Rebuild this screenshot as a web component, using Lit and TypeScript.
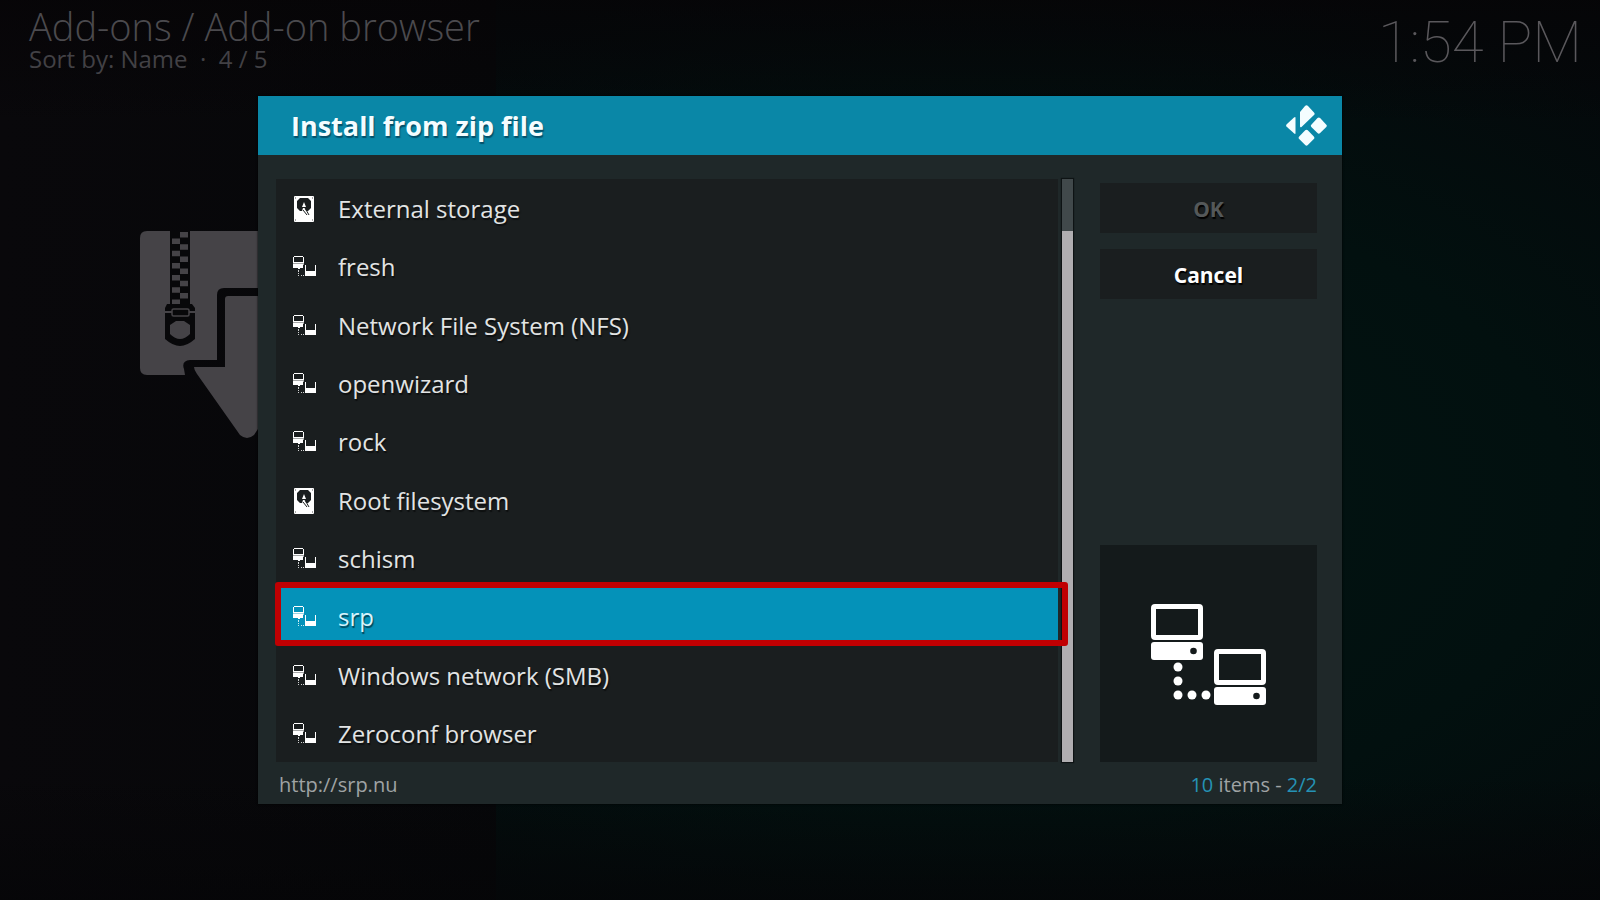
import { LitElement, html, css, svg } from "lit";
import { customElement, state } from "lit/decorators.js";

type Kind = "disk" | "network";
interface Entry {
  name: string;
  kind: Kind;
}

const ENTRIES: Entry[] = [
  { name: "External storage", kind: "disk" },
  { name: "fresh", kind: "network" },
  { name: "Network File System (NFS)", kind: "network" },
  { name: "openwizard", kind: "network" },
  { name: "rock", kind: "network" },
  { name: "Root filesystem", kind: "disk" },
  { name: "schism", kind: "network" },
  { name: "srp", kind: "network" },
  { name: "Windows network (SMB)", kind: "network" },
  { name: "Zeroconf browser", kind: "network" },
];

const diskIcon = html`<svg class="icon" width="24" height="26" viewBox="0 0 24 26" aria-hidden="true">
  <rect x="2" y="0" width="20" height="26" rx="1" fill="#fff" />
  <path d="M3 2h1M20 2h1M3 24h1M20 24h1" stroke="#555" />
  <path d="M8 2h8l3 3v7l-3 3h-2l-1-3h-2l-1 3H8l-3-3V5z" fill="#1a1e1f" />
  <path d="M13 12l4 7M11 14l4 5" stroke="#1a1e1f" stroke-width="1" />
  <path d="M12 6l2 5h-4z" fill="#fff" />
</svg>`;

const networkIcon = html`<svg class="icon" width="24" height="22" viewBox="0 0 24 22" aria-hidden="true" shape-rendering="crispEdges">
  <path d="M2 0h9v1H2zM1 1h1v6H1zM11 1h1v6h-1zM2 6h9v1H2z" fill="#fff" />
  <path d="M1 7h11v2H1z" fill="#fff" opacity=".6" />
  <path d="M1 8h10v4H1zM6 12h2v1H6z" fill="#fff" />
  <path d="M6 14h1v2H6zM6 17h1v1H6zM6 19h1v1H6zM9 19h1v1H9zM11 19h1v1h-1z" fill="#fff" opacity=".8" />
  <path d="M13 9h1v6h9V9h1v11H13z" fill="#fff" />
</svg>`;

const computer = svg`
  <rect x="2.500" y="2.500" width="47" height="31" rx="1.500" fill="none" stroke="#fff" stroke-width="5" />
  <rect x="0" y="38" width="52" height="18" rx="3" fill="#fff" />
  <circle cx="42.500" cy="47" r="3.300" fill="#141a1b" />`;

const teeth = [0, 1, 2, 3, 4, 5].map(
  (i) => svg`<path d="M40 ${1 + i * 12.2}h8v5.500h-8zM32 ${7.5 + i * 12.2}h8v5.500h-8z" />`,
);

@customElement("app-root")
export class AppRoot extends LitElement {
  @state() private selected = 7;

  static styles = css`
    :host {
      display: block;
      font-family: "Open Sans", "Noto Sans", sans-serif;
      color: #e2e4e4;
    }
    * {
      box-sizing: border-box;
    }
    .screen {
      position: relative;
      min-height: 100vh;
      overflow: hidden;
      display: grid;
      background: linear-gradient(90deg, #09080b 0, #060709 31%, transparent 31%),
        radial-gradient(ellipse 60% 60% at 62% 56%, #021513 0, #02100f 60%, #04090b 100%);
    }
    .screen::before {
      content: "";
      position: absolute;
      inset: 0;
      background: linear-gradient(180deg, #060406 0, transparent 14%, transparent 86%, #050507 100%);
      opacity: 0.7;
    }
    .topbar {
      position: absolute;
      inset: 0 0 auto 0;
      display: flex;
      justify-content: space-between;
      padding: 5px 18px 0 29px;
      color: #4b4a4e;
    }
    .crumb {
      margin: 0;
      font-size: 38px;
      line-height: 42px;
      font-weight: 300;
    }
    .sort {
      margin: 0;
      font-size: 24px;
      line-height: 24px;
      font-weight: 400;
      color: #424145;
      white-space: pre;
    }
    .clock {
      font-family: Roboto, sans-serif;
      font-weight: 100;
      font-size: 58px;
      line-height: 74px;
      color: #5a585c;
    }
    .backdrop-art {
      position: absolute;
      left: 140px;
      top: 231px;
    }
    .dialog {
      position: relative;
      place-self: center;
      width: 67.75%;
      display: flex;
      flex-direction: column;
      background: #1f2829;
      box-shadow: 0 0 2px #000;
    }
    .titlebar {
      display: flex;
      align-items: center;
      justify-content: space-between;
      height: 59px;
      padding: 0 15px 0 33px;
      background: #0a87a7;
      color: #f4fdff;
    }
    .title {
      margin: 0;
      font-size: 27px;
      line-height: 36px;
      font-weight: 700;
      text-shadow: 1px 2px 1px #05506a;
    }
    .body {
      display: grid;
      grid-template-columns: 1fr 11px 244px;
      padding: 24px 25px 0 18px;
    }
    .list {
      display: grid;
      grid-template-rows: repeat(10, 1fr);
      height: 583px;
      margin: 0 4px 0 0;
      padding: 0;
      list-style: none;
      background: #1a1e1f;
    }
    .item {
      position: relative;
      display: grid;
    }
    .row {
      display: flex;
      align-items: center;
      gap: 22px;
      width: 100%;
      padding: 2px 16px 0;
      border: 0;
      background: none;
      color: inherit;
      font: 400 24px/34px "Open Sans", "Noto Sans", sans-serif;
      text-align: left;
      text-shadow: 1px 2px 1px #0008;
    }
    .item.selected {
      background: #0492b9;
      color: #d9f3fb;
    }
    .highlight {
      position: absolute;
      z-index: 1;
      inset: -5px -10px -1px -1px;
      border: 6px solid #c00002;
      border-radius: 3px;
      pointer-events: none;
    }
    .icon {
      flex: none;
      display: block;
    }
    .scroll {
      display: flex;
      flex-direction: column;
      background: #41494b;
      box-shadow: 0 0 1px 1px #0e1314;
    }
    .thumb {
      margin-top: 52px;
      flex: 1;
      background: #b0aeb1;
    }
    .side {
      display: flex;
      flex-direction: column;
      gap: 16px;
      padding: 4px 0 0 27px;
    }
    .button {
      height: 50px;
      padding: 2px 0 0;
      border: 0;
      background: #1a1e1f;
      color: #fff;
      font: 700 21px/28px "Open Sans", "Noto Sans", sans-serif;
      text-shadow: 1px 2px 1px #000;
    }
    .button:disabled {
      color: #545859;
    }
    .preview {
      display: grid;
      place-items: center;
      height: 217px;
      margin-top: auto;
      padding-top: 2px;
      background: #141a1b;
    }
    .status {
      display: flex;
      justify-content: space-between;
      align-items: center;
      height: 42px;
      padding: 4px 25px 0 21px;
      font-size: 20px;
      line-height: 28px;
      color: #9fa3a4;
    }
    .accent {
      color: #2592b4;
    }
  `;

  render() {
    return html`
      <main class="screen">
        <header class="topbar">
          <div>
            <h1 class="crumb">Add-ons / Add-on browser</h1>
            <p class="sort">Sort by: Name  ·  4 / 5</p>
          </div>
          <time class="clock">1:54 PM</time>
        </header>

        <svg class="backdrop-art" width="220" height="210" viewBox="0 0 220 210" aria-hidden="true">
          <g fill="#454347">
            <path d="M7 0H213q7 0 7 7V57H84q-7 0-7 7V129H50q-9 1-6 9l1 6H7q-7 0-7-7V7q0-7 7-7z" />
            <path d="M85 68q0-3 3-3h40V136h31L114 204q-7 6-14 0L57 143q-3-4-3-7H85z" />
          </g>
          <path d="M30 0H50V74H30z" fill="#08080a" />
          <g fill="#454347">${teeth}</g>
          <path d="M27 73H52l3 4v31q-8 7-15 7t-15-7V77z" fill="#08080a" />
          <path d="M25 81h8M47 81h8" stroke="#454347" stroke-width="2" />
          <rect x="32" y="78" width="17" height="7" rx="1.500" fill="#08080a" stroke="#454347" stroke-width="1.500" />
          <path d="M36 90h8l6 4v9q-5 5-10 5t-10-5v-9z" fill="#454347" />
        </svg>

        <section class="dialog" role="dialog" aria-labelledby="dialog-title">
          <div class="titlebar">
            <h2 class="title" id="dialog-title">Install from zip file</h2>
            <svg width="41" height="41" viewBox="0 0 41 41" fill="#f4fdff" aria-hidden="true">
              <path d="M19 1q1.500-1.500 3 0l6 6.500q1.300 1.300 0 2.600L15.500 22q-1.500 1-1.500-1V7z" />
              <path d="M8 12.500q1.500-1.200 1.500.5v15q0 1.500-1.300.5L.7 21.800q-1.200-1.300 0-2.600z" />
              <path d="M31.500 13q1.300-1.200 2.600 0l6.200 6.700q1 1.100 0 2.200l-6.200 6.200q-1.300 1.200-2.600 0L25.300 22q-1-1.200 0-2.300z" />
              <path d="M19.200 25.300q1.300-1.200 2.600 0l6 6.200q1.200 1.300 0 2.600l-6 6q-1.300 1.300-2.600 0l-6-6q-1.200-1.300 0-2.600z" />
            </svg>
          </div>

          <div class="body">
            <ul class="list">
              ${ENTRIES.map(
                (entry, i) => html`<li class="item ${i === this.selected ? "selected" : ""}">
                  <button class="row" @click=${() => (this.selected = i)}>
                    ${entry.kind === "disk" ? diskIcon : networkIcon}<span>${entry.name}</span>
                  </button>
                  ${i === this.selected ? html`<span class="highlight"></span>` : ""}
                </li>`,
              )}
            </ul>
            <div class="scroll"><div class="thumb"></div></div>
            <div class="side">
              <button class="button" disabled>OK</button>
              <button class="button">Cancel</button>
              <div class="preview">
                <svg width="115" height="101" viewBox="0 0 115 101" aria-hidden="true">
                  ${computer}
                  <g transform="translate(63 45)">${computer}</g>
                  <g fill="#fff">
                    <circle cx="27" cy="63" r="4.500" />
                    <circle cx="27" cy="77" r="4.500" />
                    <circle cx="27" cy="91" r="4.500" />
                    <circle cx="41" cy="91" r="4.500" />
                    <circle cx="55" cy="91" r="4.500" />
                  </g>
                </svg>
              </div>
            </div>
          </div>

          <footer class="status">
            <span>http://srp.nu</span>
            <span><span class="accent">10</span> items - <span class="accent">2/2</span></span>
          </footer>
        </section>
      </main>
    `;
  }
}
